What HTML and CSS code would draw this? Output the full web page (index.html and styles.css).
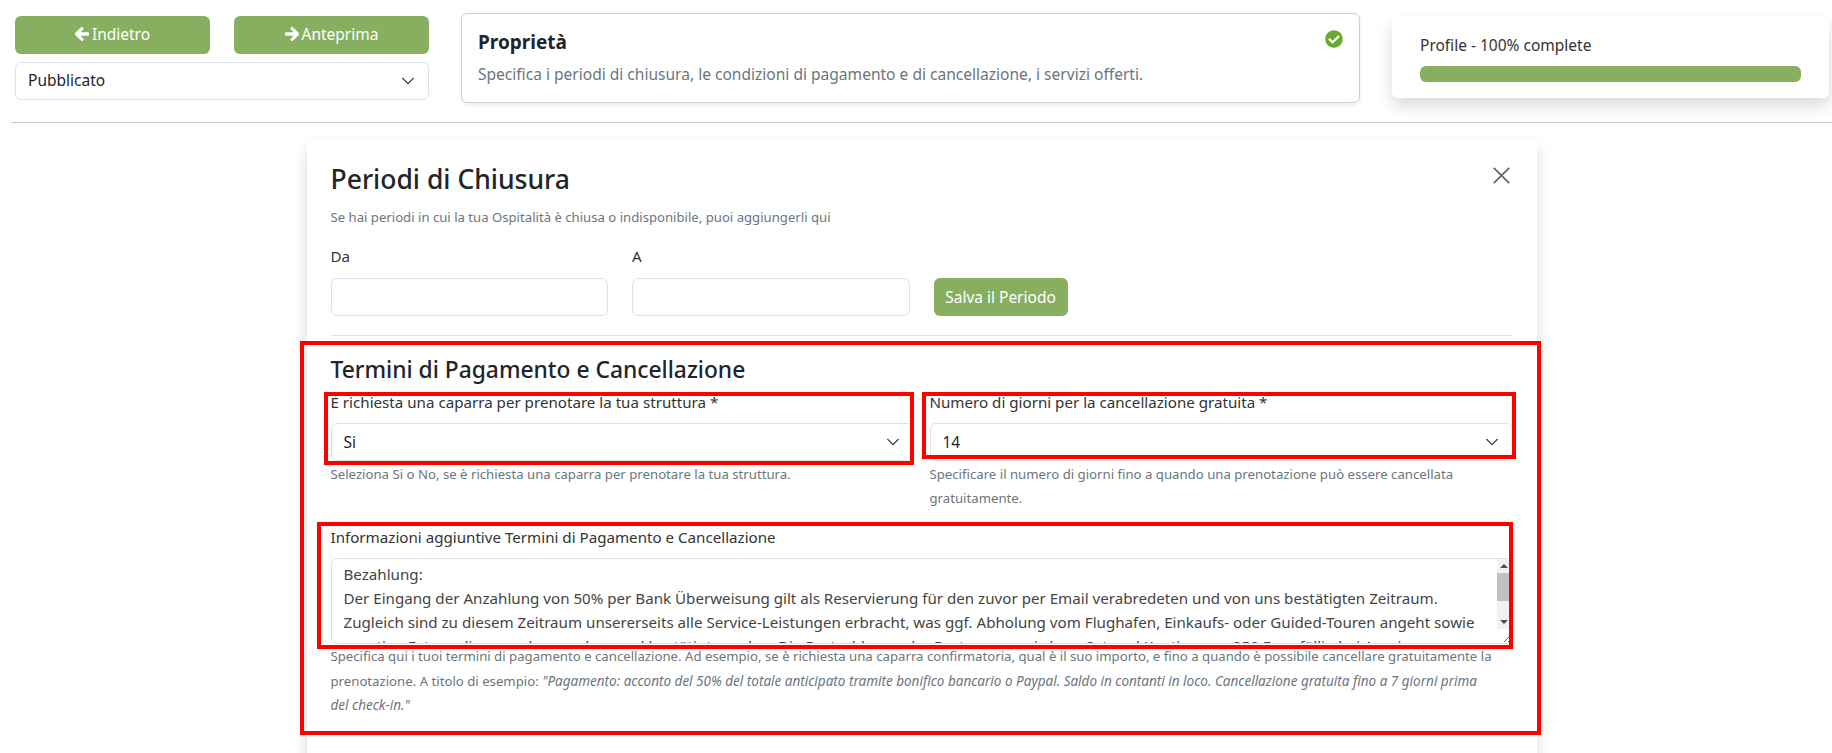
FILE: index.html
```html
<!DOCTYPE html>
<html lang="it">

<head>
    <meta charset="utf-8">
    <title>Periodi di Chiusura</title>
    <link rel="stylesheet" href="styles.css">
</head>

<body>
    <div class="topbar">
        <div class="actions">
            <div class="action-buttons">
                <button class="btn">
                    <svg class="arrow" viewBox="0 0 448 512"><path d="M257.5 445.1l-22.2 22.2c-9.4 9.4-24.6 9.4-33.9 0L7 273c-9.4-9.4-9.4-24.6 0-33.9L201.4 44.7c9.4-9.4 24.6-9.4 33.9 0l22.2 22.2c9.5 9.5 9.3 25-.4 34.3L136.6 216H424c13.3 0 24 10.7 24 24v32c0 13.3-10.7 24-24 24H136.6l120.5 114.8c9.8 9.3 10 24.8.4 34.3z"/></svg>
                    Indietro
                </button>
                <button class="btn">
                    <svg class="arrow" viewBox="0 0 448 512"><path d="M190.5 66.9l22.2-22.2c9.4-9.4 24.6-9.4 33.9 0L441 239c9.4 9.4 9.4 24.6 0 33.9L246.6 467.3c-9.4 9.4-24.6 9.4-33.9 0l-22.2-22.2c-9.5-9.5-9.3-25 .4-34.3L311.4 296H24c-13.3 0-24-10.7-24-24v-32c0-13.3 10.7-24 24-24h287.4L190.9 101.2c-9.8-9.3-10-24.8-.4-34.3z"/></svg>
                    Anteprima
                </button>
            </div>
            <div class="select-box">
                <select class="field">
                    <option>Pubblicato</option>
                </select>
                <svg class="chevron" viewBox="0 0 16 16"><path d="m2 5 6 6 6-6"/></svg>
            </div>
        </div>

        <div class="step-card">
            <div class="step-head">
                <h5>Proprietà</h5>
                <svg class="check" viewBox="0 0 512 512"><path d="M504 256c0 137-111 248-248 248S8 393 8 256 119 8 256 8s248 111 248 248zM227.3 387.3l184-184c6.2-6.2 6.2-16.4 0-22.6l-22.6-22.6c-6.2-6.2-16.4-6.2-22.6 0L216 308.1l-70.1-70.1c-6.2-6.2-16.4-6.2-22.6 0l-22.6 22.6c-6.2 6.2-6.2 16.4 0 22.6l104 104c6.2 6.2 16.4 6.2 22.6 0z"/></svg>
            </div>
            <p>Specifica i periodi di chiusura, le condizioni di pagamento e di cancellazione, i servizi offerti.</p>
        </div>

        <div class="profile-card">
            <div class="profile-label">Profile - 100% complete</div>
            <div class="progress"></div>
        </div>
    </div>

    <hr class="top-rule">

    <div class="page">
        <div class="panel">
            <svg class="close" viewBox="0 0 16 16"><path d="M1.5 1.5l13 13M14.5 1.5l-13 13"/></svg>

            <h3>Periodi di Chiusura</h3>
            <p class="hint">Se hai periodi in cui la tua Ospitalità è chiusa o indisponibile, puoi aggiungerli qui</p>

            <div class="period-row">
                <div class="period-col">
                    <label>Da</label>
                    <input class="field" type="text">
                </div>
                <div class="period-col">
                    <label>A</label>
                    <input class="field" type="text">
                </div>
                <button class="btn btn-save">Salva il Periodo</button>
            </div>

            <hr class="panel-rule">

            <h4>Termini di Pagamento e Cancellazione</h4>

            <div class="terms-row">
                <div>
                    <label>È richiesta una caparra per prenotare la tua struttura *</label>
                    <div class="select-box">
                        <select class="field">
                            <option>Si</option>
                        </select>
                        <svg class="chevron" viewBox="0 0 16 16"><path d="m2 5 6 6 6-6"/></svg>
                    </div>
                    <div class="form-text">Seleziona Si o No, se è richiesta una caparra per prenotare la tua struttura.</div>
                </div>
                <div>
                    <label>Numero di giorni per la cancellazione gratuita *</label>
                    <div class="select-box">
                        <select class="field">
                            <option>14</option>
                        </select>
                        <svg class="chevron" viewBox="0 0 16 16"><path d="m2 5 6 6 6-6"/></svg>
                    </div>
                    <div class="form-text">Specificare il numero di giorni fino a quando una prenotazione può essere cancellata gratuitamente.</div>
                </div>
            </div>

            <label>Informazioni aggiuntive Termini di Pagamento e Cancellazione</label>
            <div class="notes-box">
                <textarea class="field notes" rows="3">Bezahlung:
Der Eingang der Anzahlung von 50% per Bank Überweisung gilt als Reservierung für den zuvor per Email verabredeten und von uns bestätigten Zeitraum.
Zugleich sind zu diesem Zeitraum unsererseits alle Service-Leistungen erbracht, was ggf. Abholung vom Flughafen, Einkaufs- oder Guided-Touren angeht sowie
sonstige Extras, die zuvor besprochen und bestätigt wurden. Die Restzahlung oder Restsumme wird vor Ort und Kaution von 250 Euro fällig bei Anreise.

Stornierung:
Bis 14 Tage vor Anreise wird die Anzahlung vollständig erstattet.</textarea>
                <!-- The browser hides real scrollbars in the photo, so this one is drawn -->
                <div class="scrollbar">
                    <span class="scroll-arrow scroll-up"></span>
                    <div class="scroll-track"><span class="scroll-thumb"></span></div>
                    <span class="scroll-arrow scroll-down"></span>
                </div>
            </div>
            <div class="form-text notes-help">Specifica qui i tuoi termini di pagamento e cancellazione. Ad esempio, se è richiesta una caparra confirmatoria, qual è il suo importo, e fino a quando è possibile cancellare gratuitamente la prenotazione. A titolo di esempio: <em>"Pagamento: acconto del 50% del totale anticipato tramite bonifico bancario o Paypal. Saldo in contanti in loco. Cancellazione gratuita fino a 7 giorni prima<br>del check-in."</em></div>

            <!-- Red review marks drawn over the form -->
            <span class="mark mark-section"></span>
            <span class="mark mark-deposit"></span>
            <span class="mark mark-days"></span>
            <span class="mark mark-notes"></span>
        </div>
    </div>
</body>

</html>
```

FILE: styles.css
```css
* {
    box-sizing: border-box;
}

html,
body {
    height: 100%;
    overflow: hidden;
}

body {
    margin: 0;
    background-color: #fff;
    color: #212529;
    font-family: "Noto Sans", sans-serif;
    font-size: 15.5px;
    line-height: 24px;
}

.topbar {
    display: flex;
    align-items: flex-start;
    height: 122px;
    padding: 13px 3px 0 15px;
}

.actions {
    width: 414px;
    margin-top: 3px;
    margin-right: 32px;
    flex-shrink: 0;
}

.actions select {
    padding: 5px 12px 7px;
}

.action-buttons {
    display: flex;
    justify-content: space-between;
    margin-bottom: 8px;
}

.action-buttons .btn {
    padding-bottom: 3px;
}

.btn {
    display: inline-flex;
    align-items: center;
    justify-content: center;
    gap: 3px;
    height: 38px;
    width: 195px;
    border: none;
    border-radius: 6px;
    background-color: #87af5f;
    color: #fff;
    font-family: inherit;
    font-size: inherit;
}

.arrow {
    width: 14px;
    height: 16px;
    fill: #fff;
    stroke: #fff;
    stroke-width: 30;
}

.field {
    display: block;
    width: 100%;
    height: 38px;
    padding: 6px 12px;
    border: 1px solid #dee2e6;
    border-radius: 6px;
    background-color: #fff;
    color: #212529;
    font-family: inherit;
    font-size: inherit;
    line-height: 24px;
}

.select-box {
    position: relative;
}

.select-box select {
    appearance: none;
}

.chevron {
    position: absolute;
    top: 12px;
    right: 14px;
    width: 14px;
    height: 14px;
    fill: none;
    stroke: #343a40;
    stroke-width: 1.6;
    stroke-linecap: round;
    stroke-linejoin: round;
    pointer-events: none;
}

.step-card {
    width: 899px;
    height: 90px;
    margin-right: 32px;
    padding: 12px 16px;
    flex-shrink: 0;
    border: 1px solid #d0d0d0;
    border-radius: 6px;
    box-shadow: 0 2px 4px rgba(0, 0, 0, 0.08);
}

.step-head {
    display: flex;
    justify-content: space-between;
    align-items: flex-start;
}

.step-head h5 {
    margin: 4px 0 8px;
    font-size: 19px;
    font-weight: 700;
    line-height: 24px;
}

.check {
    width: 18px;
    height: 18px;
    margin-top: 4px;
    fill: #6aa82f;
}

.step-card p {
    margin: 0;
    color: #6c757d;
    font-size: 15.55px;
}

.profile-card {
    width: 437px;
    height: 81px;
    margin-top: 4px;
    padding: 16px 28px;
    flex-shrink: 0;
    border-radius: 6px;
    box-shadow: 0 8px 16px rgba(0, 0, 0, 0.15);
}

.profile-label {
    margin-bottom: 9px;
    color: #333;
}

.progress {
    height: 16px;
    border-radius: 6px;
    background-color: #87af5f;
}

.top-rule {
    height: 1px;
    margin: 0 0 0 11px;
    border: none;
    background-color: #c8c8c8;
}

.page {
    display: flex;
    justify-content: center;
    padding: 16px 0 0 11px;
}

.panel {
    position: relative;
    width: 1230px;
    height: 640px;
    padding: 23px 24px;
    flex-shrink: 0;
    border-radius: 6px;
    box-shadow: 0 8px 16px rgba(0, 0, 0, 0.15);
}

.close {
    position: absolute;
    top: 27px;
    right: 26px;
    width: 19px;
    height: 19px;
    fill: none;
    stroke: #666;
    stroke-width: 1.5;
}

h3 {
    margin: 0 0 9px;
    font-size: 26.5px;
    font-weight: 500;
    line-height: 34px;
}

h4 {
    margin: 0 0 6px;
    font-size: 22.8px;
    font-weight: 500;
    line-height: 29px;
}

.hint {
    margin: 0 0 15px;
    color: #6c757d;
    font-size: 13.15px;
}

label {
    display: block;
    margin-bottom: 9px;
    color: #333;
    font-size: 15.15px;
}

.period-row {
    display: flex;
    align-items: flex-end;
    gap: 24px;
}

.period-col {
    width: 277.5px;
}

.period-col label {
    margin-bottom: 10px;
}

.btn-save {
    width: 134px;
}

.panel-rule {
    height: 1px;
    margin: 19px 0 19px;
    border: none;
    background-color: #e3e3e3;
}

.terms-row {
    display: grid;
    grid-template-columns: 583px 583px;
    gap: 16px;
    margin-bottom: 15px;
}

.form-text {
    margin-top: 1px;
    color: #6c757d;
    font-size: 13.2px;
}

.notes-box {
    position: relative;
}

.notes {
    height: 86px;
    padding: 3px 27px 6px 12px;
    color: #444;
    font-size: 15.15px;
    resize: both;
}

.scrollbar {
    position: absolute;
    top: 1px;
    right: 1px;
    bottom: 15px;
    width: 15px;
    display: flex;
    flex-direction: column;
    background-color: #f1f1f1;
}

.scroll-arrow {
    height: 14px;
    flex-shrink: 0;
    display: flex;
    align-items: center;
    justify-content: center;
}

.scroll-arrow::before {
    content: "";
    border-left: 4px solid transparent;
    border-right: 4px solid transparent;
}

.scroll-up::before {
    border-bottom: 4px solid #505050;
}

.scroll-down::before {
    border-top: 4px solid #505050;
}

.scroll-track {
    flex: 1;
}

.scroll-thumb {
    display: block;
    height: 28px;
    background-color: #c1c1c1;
}

.notes-help {
    margin-top: 0;
    line-height: 24.5px;
}

.notes-help em {
    font-size: 13.5px;
}

.mark {
    position: absolute;
    border: 4px solid #f00;
    pointer-events: none;
}

.mark-section {
    top: 202px;
    left: -7px;
    width: 1241px;
    height: 394px;
}

.mark-deposit {
    top: 253px;
    left: 17px;
    width: 590px;
    height: 73px;
}

.mark-days {
    top: 253px;
    left: 615px;
    width: 594px;
    height: 67px;
}

.mark-notes {
    top: 383px;
    left: 10px;
    width: 1196px;
    height: 127px;
}
```
